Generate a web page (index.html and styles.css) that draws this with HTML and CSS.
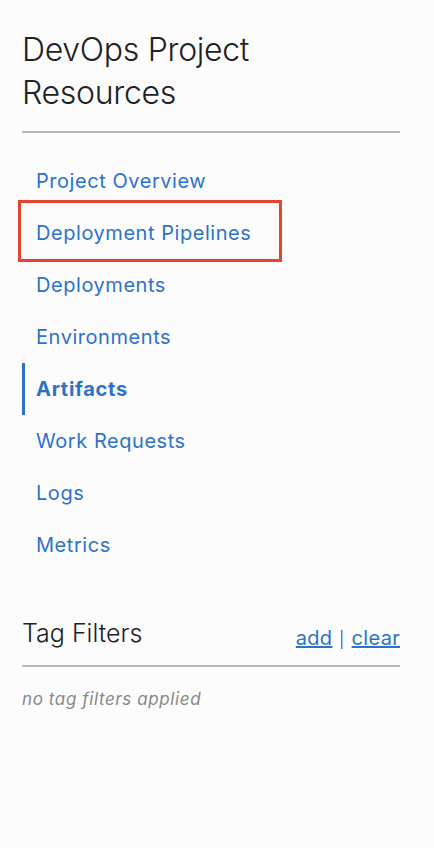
FILE: index.html
```html
<!DOCTYPE html>
<html lang="en">
<head>
<meta charset="utf-8">
<title>DevOps Project Resources</title>
<link rel="stylesheet" href="styles.css">
</head>
<body>
<aside class="sidebar">
  <h1 class="title">DevOps Project Resources</h1>
  <hr class="rule">
  <nav class="nav">
    <a class="nav-item" href="#">Project Overview</a>
    <a class="nav-item highlighted" href="#">Deployment Pipelines</a>
    <a class="nav-item" href="#">Deployments</a>
    <a class="nav-item" href="#">Environments</a>
    <a class="nav-item active" href="#">Artifacts</a>
    <a class="nav-item" href="#">Work Requests</a>
    <a class="nav-item" href="#">Logs</a>
    <a class="nav-item" href="#">Metrics</a>
  </nav>
  <div class="tags-head">
    <h2 class="tags-title">Tag Filters</h2>
    <div class="tags-actions"><a href="#">add</a> <span class="sep">|</span> <a href="#">clear</a></div>
  </div>
  <hr class="rule rule-tags">
  <p class="empty">no tag filters applied</p>
</aside>
</body>
</html>
```
FILE: styles.css
```css
html, body {
  margin: 0;
  padding: 0;
  background: #fcfcfd;
}
body {
  font-family: Inter, "Liberation Sans", sans-serif;
  width: 434px;
  height: 848px;
}
.sidebar {
  padding: 28px 34px 0 22px;
}
.title {
  margin: 0;
  max-width: 300px;
  font-size: 32px;
  font-weight: 300;
  line-height: 43px;
  color: #222;
  letter-spacing: -0.3px;
}
.rule {
  border: 0;
  border-top: 2px solid #b6b8bc;
  margin: 17px 0 0 0;
}
.nav {
  display: flex;
  flex-direction: column;
  margin-top: 22px;
}
.nav-item {
  position: relative;
  display: flex;
  align-items: center;
  height: 52px;
  padding-left: 14px;
  font-size: 20px;
  color: #2d72c8;
  text-decoration: none;
  letter-spacing: 0.55px;
}
.nav-item.active {
  font-weight: 700;
  border-left: 3px solid #2d72c8;
  padding-left: 11px;
  letter-spacing: 0.7px;
}
.nav-item.highlighted::after {
  content: "";
  position: absolute;
  left: -4px;
  top: -7px;
  width: 258px;
  height: 56px;
  border: 3px solid #e8432e;
}
.tags-head {
  display: flex;
  justify-content: space-between;
  align-items: flex-end;
  margin-top: 47px;
}
.tags-title {
  margin: 0;
  font-size: 25px;
  line-height: 30px;
  font-weight: 300;
  color: #222;
}
.tags-actions {
  font-size: 20px;
  line-height: 24px;
  color: #333;
  letter-spacing: 0.3px;
  margin-bottom: -3px;
}
.tags-actions a {
  color: #2d72c8;
}
.sep {
  font-size: 16px;
  font-weight: 300;
  padding: 0 1px;
}
.rule-tags {
  margin-top: 17px;
}
.empty {
  margin: 22px 0 0 0;
  font-size: 17px;
  font-style: italic;
  color: #888;
  letter-spacing: 0.6px;
}
```
